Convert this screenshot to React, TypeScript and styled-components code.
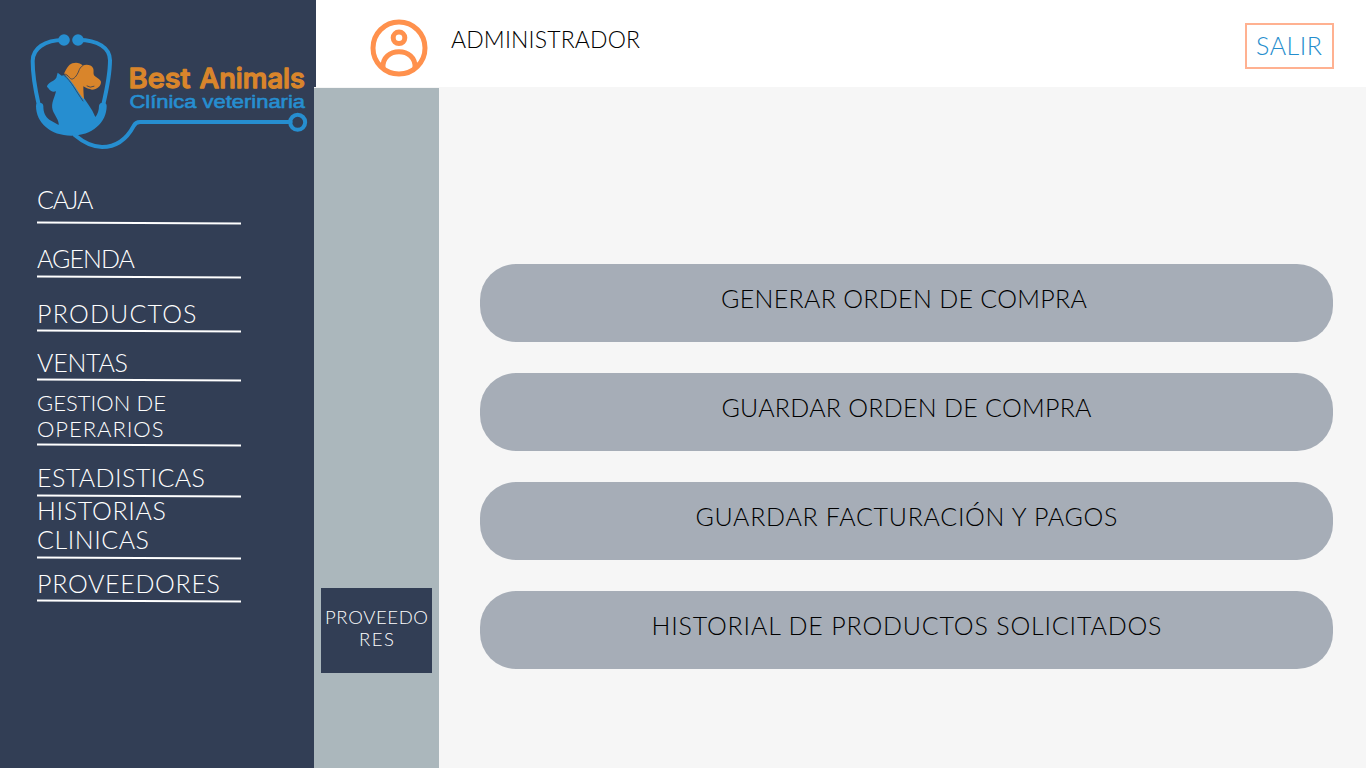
import React, { useLayoutEffect, useRef, useState } from 'react';
import styled, { createGlobalStyle } from 'styled-components';

const GlobalStyle = createGlobalStyle`
  * { box-sizing: border-box; }
  body { margin: 0; background: #f6f6f6; font-family: Lato, 'Liberation Sans', sans-serif; }
`;

const Page = styled.div`
  display: flex;
  width: 1366px;
  height: 768px;
  overflow: hidden;
  background: #323e55;
`;

const Sidebar = styled.aside`
  flex: 0 0 314px;
  background: #323e55;
  padding-top: 25px;
`;

const LogoArt = styled.svg`
  display: block;
  margin-left: 20px;
  width: 294px;
  height: 130px;
`;

const NavList = styled.nav`
  display: flex;
  flex-direction: column;
  padding: 18px 0 0 37px;
`;

const NavItem = styled.a<{ $height: number; $gap: number }>`
  position: relative;
  display: flex;
  flex-direction: column;
  justify-content: flex-end;
  width: 204px;
  height: ${(p) => p.$height}px;
  padding-bottom: ${(p) => p.$gap + 2}px;
  color: #fff;

  &::after {
    content: '';
    position: absolute;
    left: 0;
    right: 0;
    bottom: 0;
    height: 2px;
    background: #fff;
    transform: rotate(0.28deg);
  }
`;

const TextLine = styled.span<{ $size: number; $line: number }>`
  display: block;
  width: max-content;
  font-size: ${(p) => p.$size}px;
  line-height: ${(p) => p.$line}px;
  font-weight: 300;
  white-space: nowrap;
`;

const Body = styled.div`
  flex: 1;
  display: flex;
  flex-direction: column;
`;

const Header = styled.header`
  display: flex;
  align-items: flex-start;
  height: 87px;
  margin-left: 1.5px;
  padding-right: 32.5px;
  background: #fff;
`;

const Avatar = styled.svg`
  width: 58px;
  height: 58px;
  margin: 18.5px 23px 0 54.5px;
`;

const UserName = styled.div`
  padding-top: 25px;
  color: #000;
`;

const ExitButton = styled.button`
  display: flex;
  justify-content: center;
  width: 89px;
  height: 46.5px;
  margin: 22.5px 0 0 auto;
  padding: 6px 0 0;
  border: 2px solid #ffb191;
  background: #fff;
  color: #258dcd;
  font-family: inherit;
`;

const Content = styled.div`
  flex: 1;
  display: flex;
  background: #f6f6f6;
`;

const Rail = styled.div`
  flex: 0 0 125px;
  margin-top: 1px;
  padding: 499.5px 0 0 7px;
  background: #abb7bc;
`;

const RailTab = styled.div`
  display: flex;
  flex-direction: column;
  align-items: center;
  width: 111px;
  height: 85px;
  padding-top: 18px;
  background: #323e55;
  color: #fff;
`;

const Actions = styled.main`
  flex: 1;
  display: flex;
  flex-direction: column;
  gap: 31px;
  padding: 176.5px 33px 0 41px;
`;

const Action = styled.button<{ $shift: number }>`
  display: flex;
  justify-content: center;
  height: 78px;
  padding: 20.5px ${(p) => p.$shift}px 0 0;
  border: 0;
  border-radius: 36px;
  background: #a6adb7;
  color: #000;
  font-family: inherit;
`;

/* Tracks the letters so that the line spans the given width. */
function Tracked({ text, width, size = 25, line = 29 }: { text: string; width: number; size?: number; line?: number }) {
  const ref = useRef<HTMLSpanElement>(null);
  const [spacing, setSpacing] = useState(0);

  useLayoutEffect(() => {
    const el = ref.current;
    if (!el) return;
    el.style.letterSpacing = '0px';
    el.style.marginRight = '0px';
    const next = (width - el.getBoundingClientRect().width) / (text.length - 1);
    el.style.letterSpacing = `${next}px`;
    el.style.marginRight = `${-next}px`;
    setSpacing(next);
  }, [text, width, size]);

  return (
    <TextLine ref={ref} $size={size} $line={line} style={{ letterSpacing: spacing, marginRight: -spacing }}>
      {text}
    </TextLine>
  );
}

const BLUE = '#268ed0';
const ORANGE = '#d9852b';

function Logo() {
  return (
    <LogoArt viewBox="20 25 294 130">
      <g transform="translate(20 25) scale(0.33333)" fill="none" strokeLinecap="round" strokeLinejoin="round">
        <g stroke={BLUE} strokeWidth="12">
          <path d="M130 45 C75 45 38 70 38 108 C38 150 46 195 56 238" />
          <path d="M176 45 C232 45 270 68 270 106 C270 150 260 195 250 238" />
          <path d="M165 331 C190 352 215 366 246 366 C296 366 325 333 341 303 Q347 291 360 291 H812" />
          <circle cx="833" cy="292" r="22.5" strokeWidth="12" />
        </g>
        <g fill={BLUE}>
          <circle cx="132" cy="45" r="17.5" />
          <circle cx="174" cy="45" r="17.5" />
          <path d="M48 243 Q48 233 58 233 Q69 233 70 243 C70 264 76 275 88 284 L116 300 C118 286 103 270 98 255 C92 235 104 218 108 199 C98 203 90 197 87 192 L81 185 C81 178 88 174 94 170 C103 166 106 162 109 158 L113 143 L125 152 L134 150 C155 163 165 183 181 204 C198 228 216 251 226 276 Q237 262 237 242 Q239 232 249 233 Q260 233 260 243 C260 293 216 332 154 332 C92 332 48 293 48 243 Z" />
        </g>
        <path fill={ORANGE} d="M132 146 C139 133 145 119 157 115 C168 112 181 113 188 122 C200 117 214 120 219 129 C223 138 218 146 224 153 C232 160 243 164 243 171 C243 184 231 193 216 194 C207 192 199 190 190 184 C190 198 191 209 192 223 C176 207 163 174 132 146 Z" />
        <path stroke="#323e55" strokeWidth="2.5" d="M187 123 C177 127 178 139 171 149 C164 160 155 167 149 158 C143 151 139 148 134 147 M201 183 Q210 190 222 184 M132 151 C154 168 168 199 189 228" />
      </g>
      <g fill={ORANGE} stroke={ORANGE} strokeWidth="1.3" strokeLinejoin="round" fontFamily="Inter, sans-serif" fontSize="27.5" fontWeight="500">
        <text x="128.5" y="87.5" textLength="62" lengthAdjust="spacingAndGlyphs">Best</text>
        <text x="199.5" y="87.5" textLength="105.5" lengthAdjust="spacingAndGlyphs">Animals</text>
      </g>
      <text x="129.5" y="108.3" fill={BLUE} stroke={BLUE} strokeWidth="0.6" strokeLinejoin="round" fontFamily="'Liberation Sans', sans-serif" fontSize="18.5" textLength="175.5" lengthAdjust="spacingAndGlyphs">Clínica veterinaria</text>
    </LogoArt>
  );
}

type Line = [string, number];
const NAV: { lines: Line[]; height: number; gap: number; size?: number; line?: number }[] = [
  { lines: [['CAJA', 56.5]], height: 50.5, gap: 8 },
  { lines: [['AGENDA', 98]], height: 54, gap: 3 },
  { lines: [['PRODUCTOS', 159.5]], height: 54.5, gap: 2.5 },
  { lines: [['VENTAS', 91]], height: 49, gap: 2.5 },
  { lines: [['GESTION DE', 129], ['OPERARIOS', 126.5]], height: 64.5, gap: 1.5, size: 22, line: 26 },
  { lines: [['ESTADISTICAS', 168]], height: 51, gap: 3 },
  { lines: [['HISTORIAS', 129], ['CLINICAS', 112]], height: 62, gap: 3 },
  { lines: [['PROVEEDORES', 183]], height: 43.5, gap: 2.5 },
];

const ACTIONS: { text: string; width: number; shift: number }[] = [
  { text: 'GENERAR ORDEN DE COMPRA', width: 366, shift: 5 },
  { text: 'GUARDAR ORDEN DE COMPRA', width: 370, shift: 0 },
  { text: 'GUARDAR FACTURACIÓN Y PAGOS', width: 422, shift: 0 },
  { text: 'HISTORIAL DE PRODUCTOS SOLICITADOS', width: 510, shift: 0 },
];

export default function App() {
  return (
    <Page>
      <GlobalStyle />
      <Sidebar>
        <Logo />
        <NavList>
          {NAV.map((item) => (
            <NavItem key={item.lines[0][0]} $height={item.height} $gap={item.gap}>
              {item.lines.map(([text, width]) => (
                <Tracked key={text} text={text} width={width} size={item.size} line={item.line} />
              ))}
            </NavItem>
          ))}
        </NavList>
      </Sidebar>
      <Body>
        <Header>
          <Avatar viewBox="370 18.5 58 58" fill="none" stroke="#ff914d" strokeWidth="5">
            <circle cx="399" cy="47.5" r="26" />
            <circle cx="399" cy="37.3" r="5.8" />
            <path d="M383 67 C382.5 57 390 51.3 399 51.3 S415.5 57 415 67" />
          </Avatar>
          <UserName>
            <Tracked text="ADMINISTRADOR" width={189} size={23} line={28} />
          </UserName>
          <ExitButton>
            <Tracked text="SALIR" width={66} />
          </ExitButton>
        </Header>
        <Content>
          <Rail>
            <RailTab>
              <Tracked text="PROVEEDO" width={103} size={18.5} line={22} />
              <Tracked text="RES" width={35} size={18.5} line={22} />
            </RailTab>
          </Rail>
          <Actions>
            {ACTIONS.map((a) => (
              <Action key={a.text} $shift={a.shift}>
                <Tracked text={a.text} width={a.width} />
              </Action>
            ))}
          </Actions>
        </Content>
      </Body>
    </Page>
  );
}
